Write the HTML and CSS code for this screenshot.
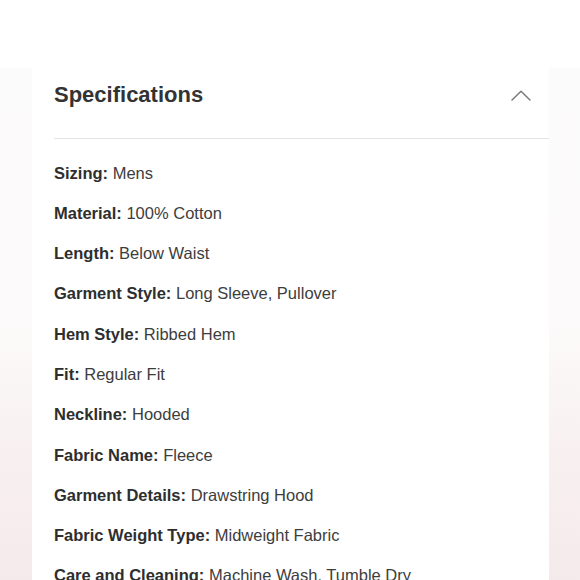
FILE: index.html
```html
<!DOCTYPE html>
<html lang="en">
<head>
<meta charset="utf-8">
<title>Specifications</title>
<link rel="stylesheet" href="styles.css">
</head>
<body>
<div class="top"></div>
<div class="stage">
  <section class="card">
    <header class="card-head">
      <h2 class="title">Specifications</h2>
      <svg class="chevron" width="20" height="11" viewBox="0 0 20 11" aria-hidden="true">
        <path d="M1 10 L10 1.2 L19 10" fill="none" stroke="#7a7a7a" stroke-width="1.5" stroke-linecap="round" stroke-linejoin="round"/>
      </svg>
    </header>
    <ul class="specs">
      <li><b>Sizing:</b> Mens</li>
      <li><b>Material:</b> 100% Cotton</li>
      <li><b>Length:</b> Below Waist</li>
      <li><b>Garment Style:</b> Long Sleeve, Pullover</li>
      <li><b>Hem Style:</b> Ribbed Hem</li>
      <li><b>Fit:</b> Regular Fit</li>
      <li><b>Neckline:</b> Hooded</li>
      <li><b>Fabric Name:</b> Fleece</li>
      <li><b>Garment Details:</b> Drawstring Hood</li>
      <li><b>Fabric Weight Type:</b> Midweight Fabric</li>
      <li><b>Care and Cleaning:</b> Machine Wash, Tumble Dry</li>
    </ul>
  </section>
</div>
</body>
</html>
```

FILE: styles.css
```css
html, body {
  margin: 0;
  padding: 0;
  background: #ffffff;
  font-family: "Liberation Sans", Arial, sans-serif;
  color: #333333;
  overflow: hidden;
  height: 580px;
}

.top {
  height: 68px;
  background: #ffffff;
}

.stage {
  display: flex;
  padding: 0 31px 0 32px;
  height: 512px;
  background: linear-gradient(to bottom, #fcfbfb 0%, #fcfafa 50%, #f8f0f0 75%, #f5eaeb 100%);
}

.card {
  flex: 1;
  background: #ffffff;
}

.card-head {
  margin-left: 22px;
  height: 54px;
  padding: 0 18px 16px 0;
  display: flex;
  align-items: center;
  justify-content: space-between;
  border-bottom: 1px solid #e4e4e4;
}

.title {
  margin: 0;
  font-size: 22px;
  line-height: 26px;
  font-weight: 700;
  color: #333333;
}

.chevron {
  display: block;
  margin-top: 1px;
}

.specs {
  list-style: none;
  margin: 0;
  padding: 23.5px 0 0 22px;
  display: flex;
  flex-direction: column;
  gap: 20.3px;
}

.specs li {
  font-size: 16.5px;
  line-height: 20px;
  color: #3d3d3d;
  white-space: nowrap;
}

.specs b {
  font-weight: 700;
  color: #2e2e2e;
}
```
